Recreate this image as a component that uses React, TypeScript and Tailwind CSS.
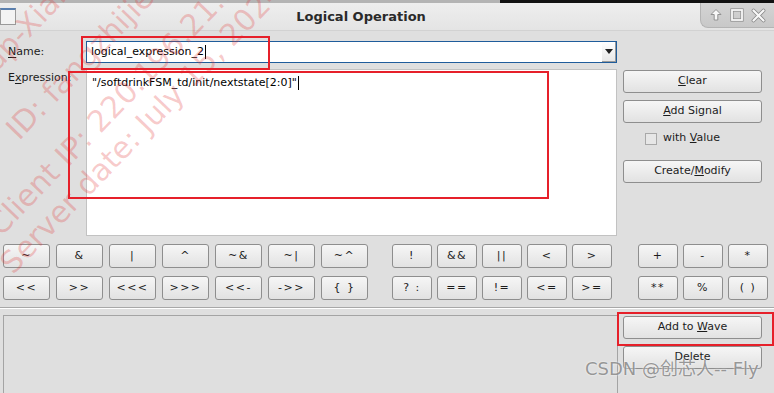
import React from 'react';

const font = "font-['DejaVu_Sans',sans-serif]";

const Btn = ({ children, className = '' }: { children: React.ReactNode; className?: string }) => (
  <div
    className={`flex items-center justify-center border border-[#8e8e8e] rounded-[3px] bg-gradient-to-b from-[#f6f6f6] to-[#e2e2e2] text-[11px] text-[#1c1c1c] ${className}`}
  >
    {children}
  </div>
);

const leftOps = [
  ['~', '&', '|', '^', '~&', '~|', '~^'],
  ['<<', '>>', '<<<', '>>>', '<<-', '->>', '{ }'],
];
const midOps = [
  ['!', '&&', '||', '<', '>'],
  ['? :', '==', '!=', '<=', '>='],
];
const rightOps = [
  ['+', '-', '*'],
  ['**', '%', '( )'],
];

const OpRow = ({ row }: { row: number }) => (
  <div className="flex h-[24px]">
    <div className="ml-[3px] flex gap-[6px]">
      {leftOps[row].map((op) => (
        <Btn key={op} className="w-[47px] h-[24px] tracking-[1.5px]">{op}</Btn>
      ))}
    </div>
    <div className="ml-[24px] flex gap-[5px]">
      {midOps[row].map((op) => (
        <Btn key={op} className="w-[40px] h-[24px] tracking-[1.5px]">{op}</Btn>
      ))}
    </div>
    <div className="ml-[26px] flex gap-[5px]">
      {rightOps[row].map((op) => (
        <Btn key={op} className="w-[40px] h-[24px] tracking-[1.5px]">{op}</Btn>
      ))}
    </div>
  </div>
);

// diagonal pink watermark from the remote desktop
const Watermark = () => (
  <div className="absolute inset-0 pointer-events-none text-[30px] leading-[34px] text-[rgba(226,50,50,0.26)] whitespace-nowrap">
    <div className="absolute left-[-36px] top-[82px] origin-bottom-left rotate-[-46deg]">Group-Xian</div>
    <div className="absolute left-[24px] top-[112px] origin-bottom-left rotate-[-46deg]">ID: fangzhijie</div>
    <div className="absolute left-[6px] top-[208px] origin-bottom-left rotate-[-46deg]">Client IP: 220.196.21.8</div>
    <div className="absolute left-[18px] top-[246px] origin-bottom-left rotate-[-46deg]">Server date: July 15, 2024</div>
  </div>
);

export default function App() {
  return (
    <div className={`relative w-[774px] h-[393px] overflow-hidden bg-[#dfdfdf] ${font}`}>
      {/* window top edge */}
      <div className="flex h-[3px]">
        <div className="flex-1 bg-[#b4b4b4]" />
        <div className="w-[274px] bg-[#111]" />
      </div>

      {/* title bar */}
      <div className="relative flex items-center h-[28px] bg-gradient-to-b from-[#eeeeee] to-[#e4e4e4] border-b border-[#d2d2d2]">
        <div className="absolute left-0 top-[5px] w-[16px] h-[17px] bg-[#f3f3f3] border border-[#9a9a9a] border-t-2 border-t-[#5a7fae]" />
        <div className="flex-1 text-center text-[13px] font-bold text-[#2a2a2a] pr-[52px]">Logical Operation</div>
        <div className="absolute right-0 top-0 w-[74px] h-[25px] flex items-center justify-around px-[4px] bg-gradient-to-b from-[#d4d4d4] to-[#c8c8c8] border-l border-b border-[#b4b4b4] rounded-bl-[8px]">
          <svg width="14" height="14" viewBox="0 0 14 14">
            <path d="M7 1.5 L12 6.5 L8.8 6.5 L8.8 12 L5.2 12 L5.2 6.5 L2 6.5 Z" fill="#f8f8f8" stroke="#8a8a8a" strokeWidth="0.9" />
          </svg>
          <svg width="14" height="14" viewBox="0 0 14 14">
            <rect x="2" y="2" width="10" height="10" fill="none" stroke="#8a8a8a" strokeWidth="3.2" />
            <rect x="2" y="2" width="10" height="10" fill="none" stroke="#f8f8f8" strokeWidth="1.8" />
          </svg>
          <svg width="15" height="15" viewBox="0 0 15 15">
            <path d="M2.5 2.5 L12.5 12.5 M12.5 2.5 L2.5 12.5" stroke="#8a8a8a" strokeWidth="3.8" strokeLinecap="round" />
            <path d="M2.5 2.5 L12.5 12.5 M12.5 2.5 L2.5 12.5" stroke="#f8f8f8" strokeWidth="2.2" strokeLinecap="round" />
          </svg>
        </div>
      </div>

      {/* name row */}
      <div className="flex items-center mt-[10px] h-[22px]">
        <div className="w-[86px] pl-[8px] text-[11px] text-[#1c1c1c]">
          <u className="underline-offset-2">N</u>ame:
        </div>
        <div className="relative flex items-center w-[531px] h-[22px] bg-white border border-[#1f5c9b]">
          <span className="pl-[4px] text-[11px] text-black">logical_expression_2</span>
          <span className="ml-[1px] w-[1px] h-[14px] bg-black" />
          <div className="absolute right-0 top-0 bottom-0 w-[14px] flex items-center justify-center bg-gradient-to-b from-[#ffffff] to-[#e8e8e8] border-r border-b border-[#9a9a9a]">
            <svg width="8" height="5" viewBox="0 0 8 5"><path d="M0 0 H8 L4 5 Z" fill="#222" /></svg>
          </div>
        </div>
      </div>

      {/* expression area */}
      <div className="flex mt-[6px] h-[167px]">
        <div className="w-[86px] pl-[8px] pt-[1px] text-[11px] text-[#1c1c1c]">
          E<u className="underline-offset-2">x</u>pression:
        </div>
        <div className="w-[531px] h-[167px] bg-white border border-[#c2c2c2] pl-[5px] pt-[5px]">
          <div className="flex items-center text-[11px] text-black">
            <span>"/softdrinkFSM_td/init/nextstate[2:0]"</span>
            <span className="ml-[1px] w-[1px] h-[14px] bg-black" />
          </div>
        </div>
        <div className="ml-[6px] w-[139px] flex flex-col pt-[1px]">
          <Btn className="h-[23px]"><span><u>C</u>lear</span></Btn>
          <Btn className="h-[23px] mt-[7px]"><span><u>A</u>dd Signal</span></Btn>
          <div className="flex items-center h-[23px] mt-[4px] pl-[22px] text-[11px] text-[#1c1c1c]">
            <div className="w-[12px] h-[12px] bg-[#e6e6e6] border border-[#a8a8a8]" />
            <span className="ml-[6px]">with <u>V</u>alue</span>
          </div>
          <Btn className="h-[23px] mt-[10px]"><span>Create/<u>M</u>odify</span></Btn>
        </div>
      </div>

      {/* operators */}
      <div className="mt-[8px] flex flex-col gap-[8px]">
        <OpRow row={0} />
        <OpRow row={1} />
      </div>

      {/* separator */}
      <div className="mt-[7px] h-[1px] bg-[#a8a8a8]" />
      <div className="h-[1px] bg-white" />

      {/* bottom area */}
      <div className="flex mt-[6px]">
        <div className="ml-[3px] w-[615px] h-[80px] border-l border-t border-r border-[#a4a4a4]" />
        <div className="ml-[5px] w-[139px] flex flex-col pt-[1px]">
          <Btn className="h-[23px]"><span>Add to <u>W</u>ave</span></Btn>
          <Btn className="h-[23px] mt-[7px]"><span>Delete</span></Btn>
        </div>
      </div>

      <Watermark />

      {/* annotation boxes */}
      <div className="absolute left-[81px] top-[36px] w-[189px] h-[34px] border-2 border-[#e6202a] pointer-events-none" />
      <div className="absolute left-[68px] top-[71px] w-[481px] h-[128px] border-2 border-[#e6202a] pointer-events-none" />
      <div className="absolute left-[617px] top-[312px] w-[157px] h-[34px] border-2 border-[#e6202a] pointer-events-none" />

      <div className="absolute left-[585px] top-[358px] text-[18px] leading-[22px] text-[rgba(120,120,120,0.75)] whitespace-nowrap pointer-events-none font-['DejaVu_Sans','Noto_Sans_CJK_SC',sans-serif] [text-shadow:0_0_2px_#fff]">
        CSDN @创芯人-- Fly
      </div>
    </div>
  );
}
